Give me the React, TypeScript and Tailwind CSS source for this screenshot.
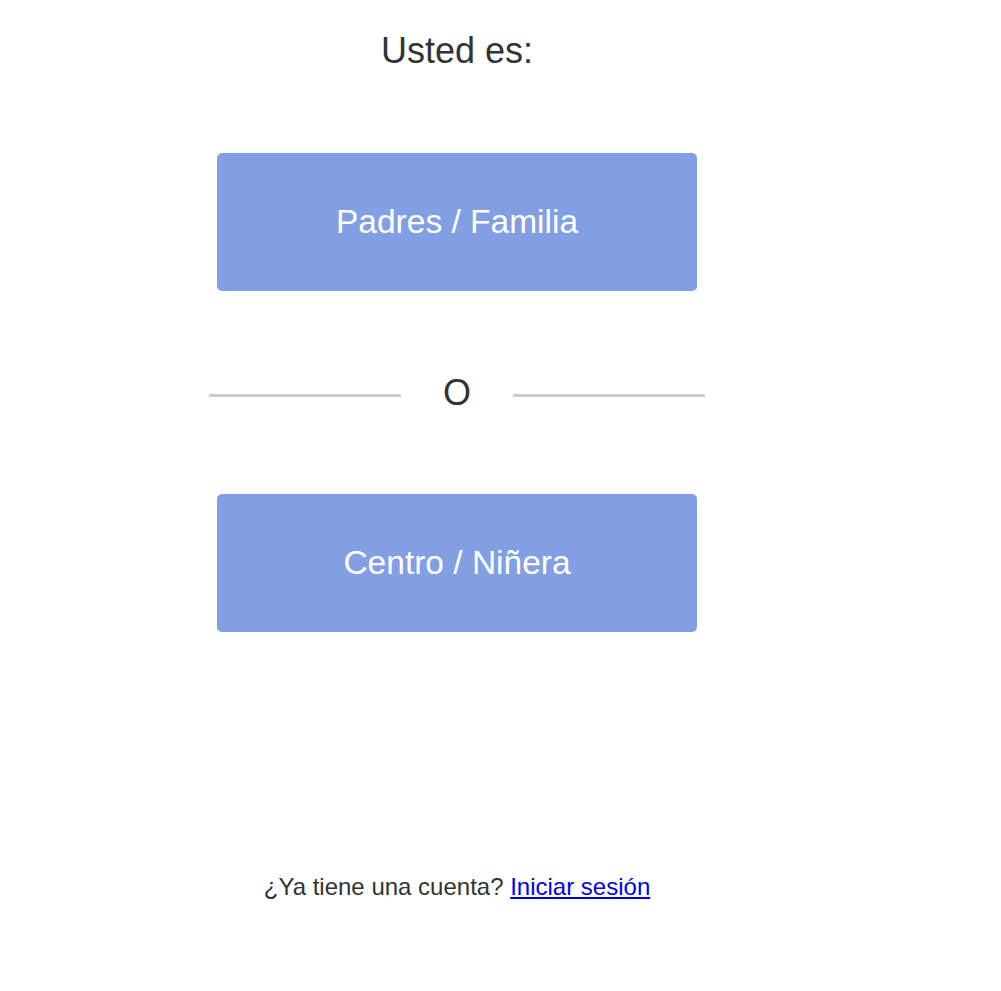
const ROLE_OPTIONS = ["Padres / Familia", "Centro / Niñera"];

const RoleButton = ({ label }: { label: string }) => (
  <div className="px-2">
    <button
      type="button"
      className="flex h-[138px] w-full items-center justify-center rounded-[5px] bg-[#829fe4] text-[33.5px] text-white"
    >
      {label}
    </button>
  </div>
);

const App = () => {
  return (
    <div className="min-h-[991px] bg-white font-['Liberation_Sans',Arial,sans-serif] text-[#333]">
      <div className="ml-[209px] flex w-[496px] flex-col pt-[33px]">
        <h1 className="h-[36px] text-center text-[36px] leading-[36px] font-normal">Usted es:</h1>

        <div className="mt-[84px]">
          <RoleButton label={ROLE_OPTIONS[0]} />
        </div>

        <div className="mt-[86px] flex h-[36px] items-center">
          <div className="mt-px h-[3px] flex-1 bg-[#cccccc]" />
          <span className="w-[112px] pb-[5px] text-center text-[36px] leading-[36px]">O</span>
          <div className="mt-px h-[3px] flex-1 bg-[#cccccc]" />
        </div>

        <div className="mt-[81px]">
          <RoleButton label={ROLE_OPTIONS[1]} />
        </div>

        <p className="mt-[243px] text-center text-[24px] leading-[24px]">
          ¿Ya tiene una cuenta?{" "}
          <a href="#" className="text-[#0000ee] underline">
            Iniciar sesión
          </a>
        </p>
      </div>
    </div>
  );
};

export default App;
